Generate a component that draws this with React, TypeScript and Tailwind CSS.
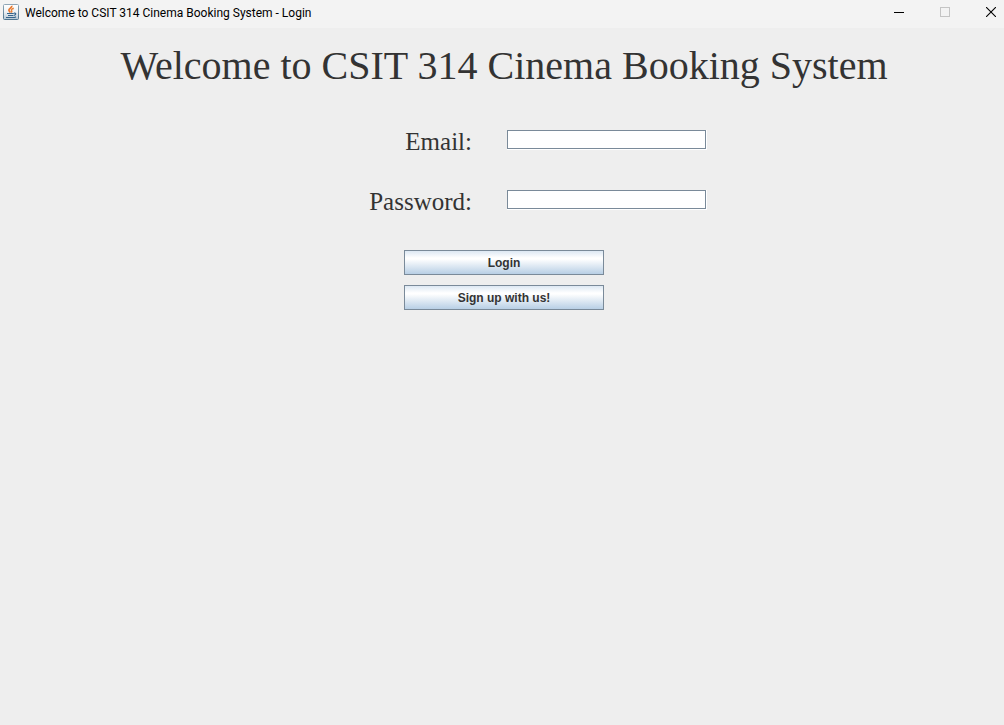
import React from "react";

function JavaIcon() {
  return (
    <svg width="16" height="16" viewBox="0 0 16 16" aria-hidden="true" className="shrink-0">
      <defs>
        <linearGradient id="tile" x1="0" y1="0" x2="0" y2="1">
          <stop offset="0" stopColor="#ffffff" />
          <stop offset="0.5" stopColor="#eef2f5" />
          <stop offset="1" stopColor="#b4c6d4" />
        </linearGradient>
        <linearGradient id="edge" x1="0" y1="0" x2="0" y2="1">
          <stop offset="0" stopColor="#8fa6b6" />
          <stop offset="1" stopColor="#4f7690" />
        </linearGradient>
      </defs>
      <rect x="0.5" y="0.5" width="15" height="15" rx="1" fill="url(#tile)" stroke="url(#edge)" />
      <path d="M8.800 1.800C9.400 3.800 5.500 4.300 5.900 6.300c.2.900 1 1.200 1.500 2.200" fill="none" stroke="#e8762c" strokeWidth="1.700" />
      <path d="M10.800 4.200C8.800 4.800 7.900 5.600 8.600 6.600c.5.700.2 1.300-.4 1.900" fill="none" stroke="#e8843c" strokeWidth="1.500" />
      <path d="M4 9.500h6.800M5 11.500h5.200M3 13.500h8.500l1.500-.6M11 9.200c2.400-.6 2.300 1.700-.3 2.300" fill="none" stroke="#36658c" strokeWidth="1.200" />
    </svg>
  );
}

function TitleBar() {
  return (
    <header className="flex h-7 items-center justify-between bg-[#f3f3f3] pl-[3px] font-[Roboto,sans-serif] text-black">
      <div className="flex items-center gap-1.5 pb-1">
        <JavaIcon />
        <span className="whitespace-nowrap pt-0.5 text-[12px] leading-4">
          Welcome to CSIT 314 Cinema Booking System - Login
        </span>
      </div>
      <div className="flex items-center gap-[26px] pr-[3px] pb-1">
        <button type="button" aria-label="Minimize" className="flex size-5 items-center justify-center">
          <svg width="10" height="10" viewBox="0 0 10 10" fill="none" stroke="#000000">
            <path d="M0 5.500h10" />
          </svg>
        </button>
        <button type="button" aria-label="Maximize" disabled className="flex size-5 items-center justify-center">
          <svg width="10" height="10" viewBox="0 0 10 10" fill="none" stroke="#c4c4c4">
            <rect x="0.5" y="0.5" width="9" height="9" />
          </svg>
        </button>
        <button type="button" aria-label="Close" className="flex size-5 items-center justify-center">
          <svg width="10" height="10" viewBox="0 0 10 10" fill="none" stroke="#000000" strokeWidth="1.100">
            <path d="M0 0l10 10M10 0L0 10" />
          </svg>
        </button>
      </div>
    </header>
  );
}

function Field({ id, label, type }: { id: string; label: string; type: string }) {
  return (
    <div className="flex h-5 items-center gap-[35px]">
      <label htmlFor={id} className="w-[171px] pt-1 text-right text-[25px] leading-7">
        {label}
      </label>
      <div className="border-r border-b border-white">
        <input
          id={id}
          type={type}
          className="block h-[19px] w-[199px] border border-[#7a8a99] bg-white px-1 font-['Liberation_Sans',sans-serif] text-xs outline-none"
        />
      </div>
    </div>
  );
}

function ActionButton({ type, children }: { type: "submit" | "button"; children: React.ReactNode }) {
  return (
    <button
      type={type}
      className="h-[25px] w-[200px] border border-[#7a8a99] bg-[linear-gradient(to_bottom,#dde8f3_0%,#ffffff_30%,#ffffff_35%,#b8cfe5_100%)] font-['Liberation_Sans',sans-serif] text-xs font-bold"
    >
      {children}
    </button>
  );
}

export default function App() {
  return (
    <div className="flex min-h-screen flex-col bg-[#eeeeee] text-[#333333]">
      <TitleBar />
      <main className="flex flex-col items-center pt-4 pl-1 font-['Liberation_Serif',serif]">
        <h1 className="text-center text-[40px] leading-[44px]">Welcome to CSIT 314 Cinema Booking System</h1>
        <form className="flex flex-col items-center gap-10 pt-[42px]" onSubmit={(e) => e.preventDefault()}>
          <Field id="email" label="Email:" type="email" />
          <Field id="password" label="Password:" type="password" />
          <div className="flex flex-col gap-2.5">
            <ActionButton type="submit">Login</ActionButton>
            <ActionButton type="button">Sign up with us!</ActionButton>
          </div>
        </form>
      </main>
    </div>
  );
}
